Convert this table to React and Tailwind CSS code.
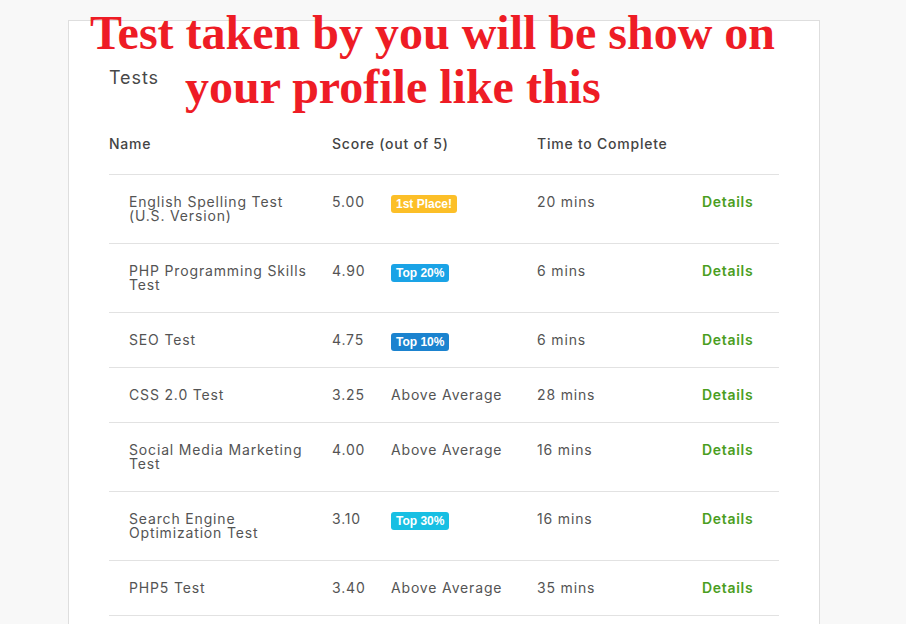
import React from "react";

const rows = [
  { name: ["English Spelling Test", "(U.S. Version)"], score: "5.00", badge: { text: "1st Place!", cls: "bg-[#fcbf28]" }, time: "20 mins" },
  { name: ["PHP Programming Skills", "Test"], score: "4.90", badge: { text: "Top 20%", cls: "bg-[#1aa3e6]" }, time: "6 mins" },
  { name: ["SEO Test"], score: "4.75", badge: { text: "Top 10%", cls: "bg-[#1b83cf]" }, time: "6 mins" },
  { name: ["CSS 2.0 Test"], score: "3.25", label: "Above Average", time: "28 mins" },
  { name: ["Social Media Marketing", "Test"], score: "4.00", label: "Above Average", time: "16 mins" },
  { name: ["Search Engine", "Optimization Test"], score: "3.10", badge: { text: "Top 30%", cls: "bg-[#18bfe3]" }, time: "16 mins" },
  { name: ["PHP5 Test"], score: "3.40", label: "Above Average", time: "35 mins" },
];

const cols = "grid grid-cols-[223px_59px_146px_165px_77px]";

export default function App() {
  return (
    <div className="relative min-h-[624px] w-[906px] overflow-hidden bg-[#f8f8f8] pl-[68px] pt-[20px] font-['Inter','Liberation_Sans',sans-serif]">
      <div className="w-[752px] h-[620px] border border-[#dedede] bg-white pl-[40px] pt-[48px]">
        <div className="text-[18px] leading-[18px] tracking-[0.05em] text-[#484848]">Tests</div>
        <div className={`${cols} mt-[50px] pb-[23px] text-[14px] leading-[14px] font-medium tracking-[0.055em] text-[#444]`}>
          <div>Name</div>
          <div className="col-span-2">Score (out of 5)</div>
          <div>Time to Complete</div>
          <div />
        </div>
        <div className="w-[670px] border-b border-[#e2e2e2]">
          {rows.map((r, i) => (
            <div key={i} className={`${cols} border-t border-[#e2e2e2] pt-[20px] pb-[20px] text-[14px] leading-[14px] tracking-[0.06em] text-[#545454]`}>
              <div className="pl-5">
                {r.name.map((n, j) => (
                  <div key={j} className="whitespace-nowrap">{n}</div>
                ))}
              </div>
              <div>{r.score}</div>
              <div className="h-[14px]">
                {r.badge ? (
                  <div className={`w-fit h-[18px] rounded-[3px] px-[5px] font-['Liberation_Sans',sans-serif] text-[12px] font-bold leading-[18px] tracking-normal text-white ${r.badge.cls}`}>
                    {r.badge.text}
                  </div>
                ) : (
                  r.label
                )}
              </div>
              <div>{r.time}</div>
              <div className="font-semibold tracking-[0.05em] text-[#4b9e1e]">Details</div>
            </div>
          ))}
        </div>
      </div>
      <div className="absolute left-[90px] top-[6px] font-['Liberation_Serif',serif] text-[48px] font-bold leading-[54px] text-[#ee1c25] whitespace-nowrap">
        <div>Test taken by you will be show on</div>
        <div className="ml-[95px]">your profile like this</div>
      </div>
    </div>
  );
}
